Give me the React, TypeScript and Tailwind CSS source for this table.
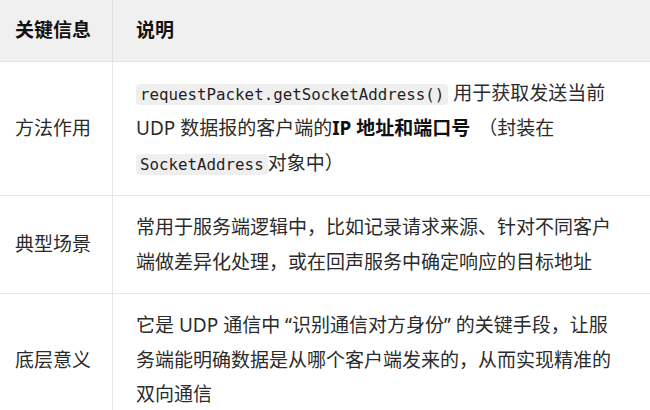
import React from "react";

const font = {
  fontFamily: '"Noto Sans", "Noto Sans CJK SC", sans-serif',
};

function Code({ children }: { children: React.ReactNode }) {
  return (
    <code className="rounded-[4px] bg-[#efefef] px-[4px] py-[1px] text-[15.8px] leading-[20px] text-[#1f1f1f] [font-family:'DejaVu_Sans_Mono',monospace]">
      {children}
    </code>
  );
}

function Row({ label, children, last }: { label: string; children: React.ReactNode; last?: boolean }) {
  return (
    <div className={"grid grid-cols-[113px_1fr] " + (last ? "" : "border-b border-[#e6e6e6]")}>
      <div className="flex items-center border-r border-[#e6e6e6] pl-[15px]">{label}</div>
      <div className="py-[14px] pl-[23px] pr-[24px]">{children}</div>
    </div>
  );
}

export default function App() {
  return (
    <div
      className="h-[410px] w-[650px] overflow-hidden bg-white text-[19px] leading-[34.5px] text-[#2b2b2b]"
      style={font}
    >
      <div className="grid h-[62px] grid-cols-[113px_1fr] border-b border-[#e3e3e3] bg-[#f0f0f0] font-bold text-[#111]">
        <div className="flex items-center border-r border-[#e0e0e0] pl-[15px]">关键信息</div>
        <div className="flex items-center pl-[23px]">说明</div>
      </div>
      <Row label="方法作用">
        <div className="leading-[35px]">
          <Code>requestPacket.getSocketAddress()</Code> 用于获取发送当前 UDP 数据报的客户端的
          <b className="font-bold text-[#111]">IP 地址和端口号</b>
          <span className="ml-[8px]">（封装在 </span>
          <Code>SocketAddress</Code>对象中）
        </div>
      </Row>
      <Row label="典型场景">
        常用于服务端逻辑中，比如记录请求来源、针对不同客户端做差异化处理，或在回声服务中确定响应的目标地址
      </Row>
      <Row label="底层意义" last>
        它是 UDP 通信中 “识别通信对方身份” 的关键手段，让服务端能明确数据是从哪个客户端发来的，从而实现精准的双向通信
      </Row>
    </div>
  );
}
